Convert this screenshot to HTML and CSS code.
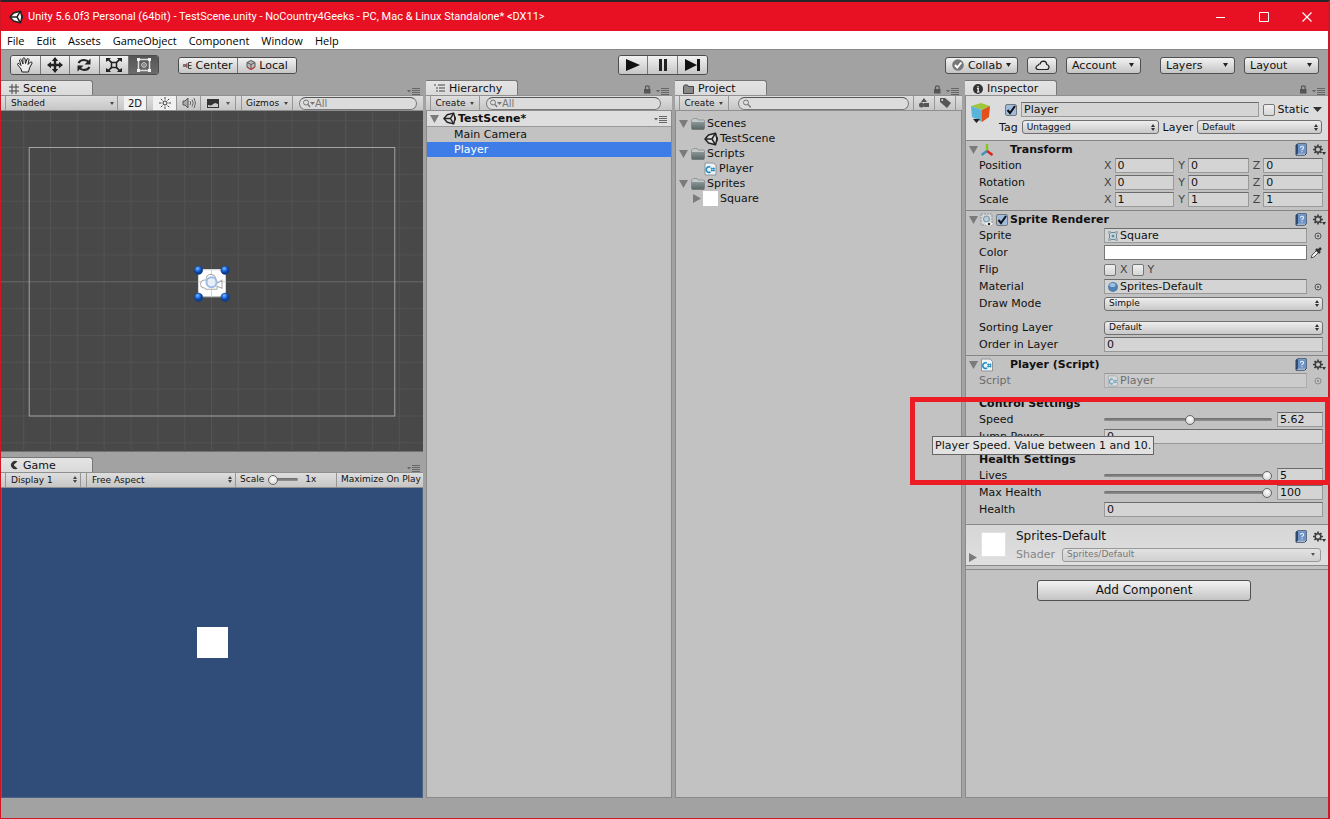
FILE: index.html
```html
<!DOCTYPE html>
<html lang="en">
<head>
<meta charset="utf-8">
<title>Unity 5.6.0f3 Personal (64bit) - TestScene.unity</title>
<link rel="stylesheet" href="styles.css">
</head>
<body>
<svg class="defs" width="0" height="0" aria-hidden="true">
  <defs>
    <symbol id="unity" viewBox="0 0 14 14"><path d="M1 7 L4.500 3 L11.500 1.200 L13 7 L11.500 12.800 L4.500 11 Z" fill="var(--cut)" stroke="currentColor" stroke-width="1.500" stroke-linejoin="round"/><path d="M1 7 H8 L11.500 1.200 M8 7 L11.500 12.800" fill="none" stroke="currentColor" stroke-width="1.500"/><path d="M13.800 4.500V9.500L12 7z" fill="currentColor"/></symbol>
    <symbol id="lock" viewBox="0 0 8 9"><path d="M2.500 4 V2.500 Q2.500 .8 4.300 .8 Q6.200 .8 6.200 2.500 V4" fill="none" stroke="#555" stroke-width="1.200"/><rect x="1" y="4" width="6.500" height="4.500" fill="#555"/></symbol>
    <symbol id="menu" viewBox="0 0 13 8"><path d="M0 3h4L2 5.500z M5 1h8v1H5z M5 3h8v1H5z M5 5h8v1H5z M5 7h8v1H5z" fill="#666"/></symbol>
    <symbol id="folder" viewBox="0 0 14 12"><path d="M.5 10 V2.500 Q.5 1.500 1.500 1.500 L2.500 .5 H6 L7 2 H12.500 Q13.500 2 13.500 3 V10 Z" fill="#c3c9c9" stroke="#7c8585" stroke-width=".7"/><path d="M.2 4 H13.800 L13.500 10.800 Q13.500 11.700 12.500 11.700 H1.500 Q.5 11.700 .5 10.800 Z" fill="url(#folder-front)"/></symbol>
    <linearGradient id="folder-front" x2="0" y2="1"><stop offset="0" stop-color="#8b9696"/><stop offset="1" stop-color="#596464"/></linearGradient>
    <symbol id="cs" viewBox="0 0 13 14"><path d="M1 1 H9.500 L12 3.500 V13 H1 Z" fill="#eef3f6" stroke="#8d9499"/><path d="M6.500 5.200 A2.800 2.800 0 1 0 6.500 10" fill="none" stroke="#1b8bc0" stroke-width="1.500"/><path d="M7.800 5.500 V9.500 M9.800 5.500 V9.500 M6.800 6.600 H11 M6.800 8.500 H11" stroke="#1b8bc0" stroke-width=".9"/></symbol>
    <symbol id="book" viewBox="0 0 12 13"><path d="M1 2 L3 .8 H11.200 V11 L9.500 12.200 H1 Z" fill="#dfe6ee" stroke="#2c4263"/><path d="M3 1.200 H11 V10.800 H3 Z" fill="#6d93c4"/><path d="M1 2 L3 1 V10.800 L1 12 Z" fill="#31496c"/><path d="M5.500 4.800 Q5.500 3.300 7 3.300 Q8.600 3.300 8.600 4.700 Q8.600 5.600 7 6.400 V7.200 M7 8.200 V9.200" fill="none" stroke="#e8f1fb" stroke-width="1.100"/></symbol>
    <symbol id="gear" viewBox="0 0 13 12"><circle cx="5" cy="5.500" r="2.800" fill="none" stroke="#3d3d3d" stroke-width="1.500"/><path d="M5 .5V2.500 M5 8.500V10.500 M0 5.500H2 M8 5.500H10 M1.500 2L2.900 3.400 M7.100 7.600L8.500 9 M8.500 2L7.100 3.400 M1.500 9L2.900 7.600" stroke="#3d3d3d" stroke-width="1.700"/><path d="M9 8h4l-2 3z" fill="#333"/></symbol>
    <symbol id="pick" viewBox="0 0 8 8"><circle cx="4" cy="4" r="3" fill="none" stroke="#555"/><circle cx="4" cy="4" r=".9" fill="#444"/></symbol>
    <symbol id="down" viewBox="0 0 9 8"><path d="M0 0h9L4.500 8z" fill="#7b7b7b"/></symbol>
    <symbol id="right" viewBox="0 0 8 9"><path d="M0 0v9l8-4.500z" fill="#7b7b7b"/></symbol>
    <symbol id="rect" viewBox="0 0 12 12"><path d="M2.500 2.500h7v7h-7z" fill="#c9d8df" stroke="#71858f"/><path d="M1 1h3v3H1z M8 1h3v3H8z M1 8h3v3H1z M8 8h3v3H8z" fill="#9fb1ba"/><circle cx="6" cy="6" r="1.500" fill="#6a8fa3"/></symbol>
  </defs>
</svg>
<div class="window">
  <header class="titlebar">
    <svg class="titlebar-logo" width="14" height="14"><use href="#unity"/></svg>
    <h1 class="titlebar-text">Unity 5.6.0f3 Personal (64bit) - TestScene.unity - NoCountry4Geeks - PC, Mac &amp; Linux Standalone* &lt;DX11&gt;</h1>
    <div class="window-buttons">
      <button aria-label="Minimize"><svg width="10" height="10"><path d="M0 5.500h9" stroke="#fff"/></svg></button>
      <button aria-label="Maximize"><svg width="10" height="10"><path d="M.5 .5h9v9h-9z" fill="none" stroke="#fff"/></svg></button>
      <button aria-label="Close"><svg width="10" height="10"><path d="M.5 .5l9 9m0-9l-9 9" stroke="#fff" stroke-width="1.200"/></svg></button>
    </div>
  </header>
  <nav class="menubar">
    <button>File</button><button>Edit</button><button>Assets</button><button>GameObject</button><button>Component</button><button>Window</button><button>Help</button>
  </nav>
  <div class="toolbar">
    <div class="toolbar-left">
      <div class="group tools">
        <button aria-label="Hand"><svg width="18" height="18" viewBox="0 0 18 18"><path d="M6 16 L5 13 L1.500 8.500 Q1.500 7 3 7.500 L5 9.500 L3.500 4 Q4.500 2.300 5.500 4 L7 8 L6.800 2.500 Q8 1 9 2.500 L9.500 7.500 L11 3 Q12.500 2 13 3.500 L12 8.500 L14.500 6 Q16.300 5.500 16 7.200 L13.500 12 L12.500 16 Z" fill="#eee" stroke="#222"/></svg></button>
        <button aria-label="Move"><svg width="16" height="16" viewBox="0 0 16 16"><path d="M8 0l3.200 4H9.200v2.800H12V4.800L16 8l-4 3.200V9.200H9.200V12h2L8 16l-3.200-4h2V9.200H4v2L0 8l4-3.200v2h2.800V4h-2z" fill="#222"/></svg></button>
        <button aria-label="Rotate"><svg width="16" height="16" viewBox="0 0 16 16"><path d="M2.500 6 Q4 3 8 3 Q11 3 13 5.500 M13.500 10 Q12 13 8 13 Q5 13 3 10.500" fill="none" stroke="#222" stroke-width="2"/><path d="M14.500 1.500v6h-6z M1.500 14.500v-6h6z" fill="#222"/></svg></button>
        <button aria-label="Scale"><svg width="18" height="16" viewBox="0 0 18 16"><path d="M1 1h5L4.600 2.400 7 4.800 5.800 6 3.200 3.600 1 5z M17 1h-5l1.400 1.400L11 4.800 12.200 6l2.600-2.400L17 5z M1 15h5l-1.400-1.400L7 11.200 5.800 10l-2.600 2.400L1 11z M17 15h-5l1.400-1.400-2.400-2.400 1.200-1.200 2.600 2.400L17 11z" fill="#222"/><path d="M6.500 5.500h5v5h-5z" fill="#ddd" stroke="#222" stroke-width="1.500"/></svg></button>
        <button class="active" aria-label="Rect"><svg width="16" height="16" viewBox="0 0 16 16"><path d="M2.500 2.500h11v11h-11z" fill="none" stroke="#ddd" stroke-width="1.500"/><path d="M1 1h3v3h-3z M12 1h3v3h-3z M1 12h3v3h-3z M12 12h3v3h-3z" fill="#f2f2f2"/><circle cx="8" cy="8" r="2.300" fill="none" stroke="#ddd"/><circle cx="8" cy="8" r=".8" fill="#ddd"/></svg></button>
      </div>
      <div class="group pivot">
        <button><svg width="9" height="9" viewBox="0 0 9 9"><path d="M0 3h4v3H0z" fill="#777"/><path d="M4 2v5" stroke="#b33"/><path d="M8.500 1.500H5.500v6h3 M5.500 4.500h3" fill="none" stroke="#444"/></svg>Center</button>
        <button><svg width="10" height="10" viewBox="0 0 10 10"><path d="M5 .5l4 2v4.500l-4 2.500-4-2.500V2.500z" fill="#bbb" stroke="#555"/><path d="M1 2.500l4 2 4-2M5 4.500v5" fill="none" stroke="#555"/><path d="M1 7l4 2.500L9 7" fill="none" stroke="#b44" stroke-width="1.300"/></svg>Local</button>
      </div>
    </div>
    <div class="group play">
      <button aria-label="Play"><svg width="14" height="12"><path d="M0 0l14 6L0 12z" fill="#111"/></svg></button>
      <button aria-label="Pause"><svg width="10" height="12"><path d="M1 0h3v12H1z M6 0h3v12H6z" fill="#222"/></svg></button>
      <button aria-label="Step"><svg width="15" height="12"><path d="M0 0l12 6L0 12z M12 0h3v12h-3z" fill="#111"/></svg></button>
    </div>
    <div class="toolbar-right">
      <button class="btn collab"><svg width="12" height="12" viewBox="0 0 12 12"><circle cx="6" cy="6" r="5.800" fill="#777"/><path d="M3 6l2.300 2.500L9.300 3.500" fill="none" stroke="#fff" stroke-width="2"/></svg>Collab<svg width="5" height="4"><path d="M0 0h5L2.500 4z" fill="#222"/></svg></button>
      <button class="btn cloud" aria-label="Services"><svg width="15" height="11" viewBox="0 0 15 11"><path d="M3.500 9.500 Q1 9.500 1 7.500 Q1 5.800 3 5.500 Q3.200 3.800 5 4 Q6 1.200 8.500 1.200 Q11.500 1.300 11.700 4.500 Q14 5 14 7.200 Q13.800 9.500 11.500 9.500 Z" fill="#e6e6e6" stroke="#222" stroke-width="1.200"/></svg></button>
      <button class="btn drop">Account<svg width="5" height="4"><path d="M0 0h5L2.500 4z" fill="#222"/></svg></button>
      <button class="btn drop layers">Layers<svg width="5" height="4"><path d="M0 0h5L2.500 4z" fill="#222"/></svg></button>
      <button class="btn drop">Layout<svg width="5" height="4"><path d="M0 0h5L2.500 4z" fill="#222"/></svg></button>
    </div>
  </div>

  <main class="workspace">
    <div class="column">
      <section class="panel scene">
        <div class="tabs"><h2 class="tab wide"><svg width="10" height="10"><path d="M3 0v10M7 0v10M0 3h10M0 7h10" stroke="#444"/></svg>Scene</h2><svg class="tab-menu" width="13" height="8"><use href="#menu"/></svg></div>
        <div class="bar">
          <select class="bar-select shading" aria-label="Shading"><option>Shaded</option></select>
          <button class="bar-btn on mode">2D</button>
          <button class="bar-btn on icon" aria-label="Lighting"><svg width="12" height="12" viewBox="0 0 12 12"><circle cx="6" cy="6" r="2" fill="none" stroke="#333"/><path d="M6 0v2.500M6 9.500V12M0 6h2.500M9.500 6H12M1.800 1.800l1.700 1.700M8.500 8.500l1.700 1.700M10.200 1.800L8.500 3.500M3.500 8.500l-1.700 1.700" stroke="#444"/></svg></button>
          <button class="bar-btn icon" aria-label="Audio"><svg width="14" height="12" viewBox="0 0 14 12"><path d="M1 4h2l3-3v10L3 8H1z" fill="#aaa" stroke="#555"/><path d="M8 4q1.500 2 0 4M10 2.500q2.500 3.500 0 7M12 1q3 5 0 10" fill="none" stroke="#666"/></svg></button>
          <button class="bar-btn effects" aria-label="Effects"><svg width="12" height="9"><path d="M0 0h12v9H0z" fill="#333"/><path d="M1 8V6l3 .5L8 4l3 1v3z" fill="#ccc"/></svg><svg class="effects-arrow" width="4" height="3"><path d="M0 0h4L2 3z" fill="#555"/></svg></button>
          <button class="bar-btn gizmos">Gizmos<svg width="4" height="3"><path d="M0 0h4L2 3z" fill="#444"/></svg></button>
          <input class="search filter" type="search" aria-label="Search scene" placeholder="All">
        </div>
        <svg class="scene-view" viewBox="0 0 422 340" preserveAspectRatio="xMidYMid slice">
          <defs>
            <pattern id="grid" x="210" y="170" width="26.800" height="26.800" patternUnits="userSpaceOnUse"><path d="M.5 0V26.800M0 .5H26.800" stroke="#525252" fill="none"/></pattern>
            <radialGradient id="dot" cx=".4" cy=".3"><stop offset="0" stop-color="#7fb8ff"/><stop offset=".6" stop-color="#1c6be0"/><stop offset="1" stop-color="#0b3f9a"/></radialGradient>
          </defs>
          <rect width="422" height="340" fill="#484848"/>
          <rect width="422" height="340" fill="url(#grid)"/>
          <path d="M76.500 0V340M344.500 0V340M210.500 0V340" stroke="#545454"/>
          <path d="M0 170.500H422" stroke="#646464"/>
          <path d="M28.500 36.500H393.500V304.500H28.500Z" fill="none" stroke="#a3a3a3"/>
          <rect x="197" y="158" width="27" height="27" fill="#fff"/>
          <path d="M197.500 158.500h27v27h-27zM210.500 158v27M197 170.500h27" fill="none" stroke="#d5d5d5"/>
          <path d="M204 177q-6-1-4-6 2-3 5-2 0-6 5-6 5 1 5 6l1 3 5-3v8l-5-2v3h-11z" fill="#fff" stroke="#aaa"/>
          <circle cx="210.500" cy="171" r="5" fill="#e9eff8" stroke="#9dbce8" stroke-width="2"/>
          <g fill="url(#dot)" stroke="#173a70" stroke-width=".5"><circle cx="197.500" cy="159" r="4.200"/><circle cx="224" cy="159" r="4.200"/><circle cx="197.500" cy="186" r="4.200"/><circle cx="224" cy="186" r="4.200"/></g>
        </svg>
      </section>
      <section class="panel game">
        <div class="tabs"><h2 class="tab wide"><svg width="10" height="10"><path d="M8.500 1.500A4.200 4.200 0 1 0 8.500 8.500L5 5.500V4.500Z" fill="#333"/></svg>Game</h2><svg class="tab-menu" width="13" height="8"><use href="#menu"/></svg></div>
        <div class="bar">
          <select class="bar-select updown display" aria-label="Display"><option>Display 1</option></select>
          <select class="bar-select updown aspect" aria-label="Aspect"><option>Free Aspect</option></select>
          <label class="scale">Scale<input type="range" min="1" max="5" value="1"><span>1x</span></label>
          <button class="bar-btn maximize">Maximize On Play</button>
        </div>
        <div class="game-view"><div class="sprite"></div></div>
      </section>
    </div>

    <section class="panel hierarchy">
      <div class="tabs"><h2 class="tab"><svg width="11" height="9"><path d="M0 1h2M4 1h7M2 4h2M5 4h6M2 7h2M5 7h6" stroke="#444"/></svg>Hierarchy</h2><svg class="tab-lock" width="8" height="9"><use href="#lock"/></svg><svg class="tab-menu" width="13" height="8"><use href="#menu"/></svg></div>
      <div class="bar"><button class="bar-btn create">Create<svg width="4" height="3"><path d="M0 0h4L2 3z" fill="#444"/></svg></button><input class="search filter" type="search" aria-label="Search hierarchy" placeholder="All"></div>
      <div class="body">
        <div class="scene-row"><svg width="9" height="8"><use href="#down"/></svg><svg class="logo" width="13" height="13"><use href="#unity"/></svg><strong>TestScene*</strong><svg class="row-menu" width="13" height="8"><use href="#menu"/></svg></div>
        <ul class="objects"><li>Main Camera</li><li class="selected">Player</li></ul>
      </div>
    </section>

    <section class="panel project">
      <div class="tabs"><h2 class="tab"><svg width="11" height="10"><path d="M.5 9.500v-7l1-1.500h3l1 1.500h5v7z" fill="#888" stroke="#444"/></svg>Project</h2><svg class="tab-lock" width="8" height="9"><use href="#lock"/></svg><svg class="tab-menu" width="13" height="8"><use href="#menu"/></svg></div>
      <div class="bar"><button class="bar-btn create">Create<svg width="4" height="3"><path d="M0 0h4L2 3z" fill="#444"/></svg></button><input class="search" type="search" aria-label="Search project">
        <button class="bar-btn tag" aria-label="Search by type"><svg width="10" height="10"><path d="M5 0l3 4H2z M5 5h5v4H5z" fill="#555"/><circle cx="2.500" cy="7" r="2.500" fill="#555"/></svg></button>
        <button class="bar-btn tag" aria-label="Search by label"><svg width="11" height="10"><path d="M0 0h5l6 5-4 5-7-6z" fill="#555"/><circle cx="2.200" cy="2" r="1" fill="#ddd"/></svg></button></div>
      <ul class="body tree">
        <li class="dir"><svg width="9" height="8"><use href="#down"/></svg><svg width="14" height="12"><use href="#folder"/></svg>Scenes</li>
        <li class="leaf"><svg class="logo" width="14" height="14"><use href="#unity"/></svg>TestScene</li>
        <li class="dir"><svg width="9" height="8"><use href="#down"/></svg><svg width="14" height="12"><use href="#folder"/></svg>Scripts</li>
        <li class="leaf"><svg width="13" height="14"><use href="#cs"/></svg>Player</li>
        <li class="dir"><svg width="9" height="8"><use href="#down"/></svg><svg width="14" height="12"><use href="#folder"/></svg>Sprites</li>
        <li class="leaf sprite-leaf"><svg width="8" height="9"><use href="#right"/></svg><span class="thumb"></span>Square</li>
      </ul>
    </section>

    <section class="panel inspector">
      <div class="tabs"><h2 class="tab"><svg width="10" height="10"><circle cx="5" cy="5" r="5" fill="#333"/><path d="M5 2v1.500M4 4.500h1.200V8M4 8h2.500" fill="none" stroke="#fff" stroke-width="1.200"/></svg>Inspector</h2><svg class="tab-lock" width="8" height="9"><use href="#lock"/></svg><svg class="tab-menu" width="13" height="8"><use href="#menu"/></svg></div>
      <div class="body">
        <div class="object-head">
          <svg class="cube" width="22" height="22" viewBox="0 0 22 22"><path d="M1 4l10-3 9 3-8 4z" fill="#9dc63b"/><path d="M1 4l11 4v12L2 15z" fill="#5cb3d8"/><path d="M20 4l-8 4v12l7-5z" fill="#e2501c"/><path d="M3 17h7l-3.500 4z" fill="#222"/></svg>
          <div class="object-fields">
            <div class="object-line">
              <input class="check" type="checkbox" aria-label="Active" checked>
              <input class="field name" type="text" aria-label="Name" value="Player">
              <label class="static"><input class="check" type="checkbox">Static</label><svg width="9" height="5"><path d="M0 0h9L4.500 5z" fill="#333"/></svg>
            </div>
            <div class="object-line second">
              <label for="tag">Tag</label><select id="tag" class="popup tag-select"><option>Untagged</option></select>
              <label for="layer">Layer</label><select id="layer" class="popup layer-select"><option>Default</option></select>
            </div>
          </div>
        </div>

        <section class="component">
          <h3 class="component-head"><svg width="9" height="8"><use href="#down"/></svg><svg width="14" height="14" viewBox="0 0 14 14"><path d="M7 8V1" stroke="#88c51d" stroke-width="2.500"/><path d="M7 8l-5.500 4" stroke="#3b96c4" stroke-width="2.500"/><path d="M7 8l5.500 4" stroke="#d22" stroke-width="2.500"/></svg><span class="check-space"></span><span class="component-title">Transform</span><svg width="12" height="13"><use href="#book"/></svg><svg width="13" height="12"><use href="#gear"/></svg></h3>
          <div class="row"><span class="label">Position</span><div class="vector"><label>X<input class="field" value="0"></label><label>Y<input class="field" value="0"></label><label>Z<input class="field" value="0"></label></div></div>
          <div class="row"><span class="label">Rotation</span><div class="vector"><label>X<input class="field" value="0"></label><label>Y<input class="field" value="0"></label><label>Z<input class="field" value="0"></label></div></div>
          <div class="row"><span class="label">Scale</span><div class="vector"><label>X<input class="field" value="1"></label><label>Y<input class="field" value="1"></label><label>Z<input class="field" value="1"></label></div></div>
        </section>

        <section class="component">
          <h3 class="component-head"><svg width="9" height="8"><use href="#down"/></svg><svg width="14" height="14" viewBox="0 0 14 14"><path d="M1 1h11v11H1z" fill="#d5d9db" stroke="#8d9499" stroke-dasharray="2 1"/><circle cx="6.500" cy="6" r="3" fill="#b7cdd9" stroke="#7892a0"/><path d="M5 11q3.500-4 8 0-4 3.500-8 0z" fill="#fff"/><circle cx="9" cy="11" r="1.300" fill="#222"/></svg><input class="check" type="checkbox" aria-label="Sprite Renderer enabled" checked><span class="component-title">Sprite Renderer</span><svg width="12" height="13"><use href="#book"/></svg><svg width="13" height="12"><use href="#gear"/></svg></h3>
          <div class="row"><span class="label">Sprite</span><button class="field object"><svg width="12" height="12"><use href="#rect"/></svg>Square</button><svg class="pick" width="8" height="8"><use href="#pick"/></svg></div>
          <div class="row"><label class="label" for="color">Color</label><button id="color" class="field color" aria-label="Color"></button><svg class="pick dropper" width="13" height="13" viewBox="0 0 13 13"><path d="M1 12l1-3 5-5 2 2-5 5z" fill="#eee" stroke="#555"/><path d="M6 3l4 4M8 5l3-3" stroke="#333" stroke-width="2.500"/></svg></div>
          <div class="row"><span class="label">Flip</span><div class="flip"><label><input class="check" type="checkbox">X</label><label><input class="check" type="checkbox">Y</label></div></div>
          <div class="row"><span class="label">Material</span><button class="field object"><svg width="12" height="12"><circle cx="6" cy="6" r="5" fill="#4f82b0"/><ellipse cx="5.500" cy="4" rx="3" ry="2" fill="#9cc0dd"/></svg>Sprites-Default</button><svg class="pick" width="8" height="8"><use href="#pick"/></svg></div>
          <div class="row"><label class="label" for="draw">Draw Mode</label><select id="draw" class="popup"><option>Simple</option></select></div>
          <div class="row spaced"><label class="label" for="sorting">Sorting Layer</label><select id="sorting" class="popup"><option>Default</option></select></div>
          <div class="row"><label class="label" for="order">Order in Layer</label><input id="order" class="field" value="0"></div>
        </section>

        <section class="component script">
          <h3 class="component-head"><svg width="9" height="8"><use href="#down"/></svg><svg width="14" height="14"><use href="#cs"/></svg><span class="check-space"></span><span class="component-title">Player (Script)</span><svg width="12" height="13"><use href="#book"/></svg><svg width="13" height="12"><use href="#gear"/></svg></h3>
          <div class="row disabled"><span class="label">Script</span><button class="field object" disabled><svg width="12" height="12" viewBox="0 0 13 14"><use href="#cs"/></svg>Player</button><svg class="pick" width="8" height="8"><use href="#pick"/></svg></div>
          <h4 class="group-title">Control Settings</h4>
          <div class="row"><label class="label" for="speed">Speed</label><input id="speed" type="range" min="1" max="10" step="0.01" value="5.62"><input class="field number" aria-label="Speed value" value="5.62"></div>
          <div class="row"><label class="label" for="jump">Jump Power</label><input id="jump" class="field" value="0"></div>
          <h4 class="group-title">Health Settings</h4>
          <div class="row"><label class="label" for="lives">Lives</label><input id="lives" type="range" min="0" max="5" value="5"><input class="field number" aria-label="Lives value" value="5"></div>
          <div class="row"><label class="label" for="max">Max Health</label><input id="max" type="range" min="0" max="100" value="100"><input class="field number" aria-label="Max Health value" value="100"></div>
          <div class="row"><label class="label" for="health">Health</label><input id="health" class="field" value="0"></div>
          <div class="highlight"></div>
          <div class="tooltip" role="tooltip">Player Speed. Value between 1 and 10.</div>
        </section>

        <section class="material">
          <svg class="material-arrow" width="8" height="9"><use href="#right"/></svg>
          <span class="material-thumb"></span>
          <div class="material-info">
            <div class="material-head"><h3>Sprites-Default</h3><svg width="12" height="13"><use href="#book"/></svg><svg width="13" height="12"><use href="#gear"/></svg></div>
            <div class="material-shader"><label for="shader">Shader</label><select id="shader" class="popup single" disabled><option>Sprites/Default</option></select></div>
          </div>
        </section>
        <div class="add"><button class="btn">Add Component</button></div>
      </div>
    </section>
  </main>
  <footer class="status"></footer>
</div>
</body>
</html>
```

FILE: styles.css
```css
* { box-sizing: border-box; }

body {
  margin: 0;
  background: #242026;
  color: #111;
  font: 11px/15px "DejaVu Sans", sans-serif;
}

h1, h2, h3, h4, ul { margin: 0; padding: 0; font: inherit; list-style: none; }
button, input, select { margin: 0; padding: 0; border: 0; border-radius: 0; background: none; color: inherit; font: inherit; min-width: 0; }
svg { flex: none; display: block; }
.defs { position: absolute; }
.logo { color: #222; --cut: #ddd; }

.window {
  display: flex;
  flex-direction: column;
  height: 100vh;
  border: 1px solid #cf1724;
  border-top: 2px solid #29262b;
  border-right-width: 2px;
  background: #a2a2a2;
}

/* Title and menu */
.titlebar { display: flex; align-items: center; height: 29px; padding-left: 8px; background: #e81123; color: #fff; }
.titlebar-logo { color: #222; --cut: #fff; }
.titlebar-text { flex: 1; margin-left: 5px; font: 11px/16px Roboto, sans-serif; white-space: nowrap; overflow: hidden; }
.window-buttons { display: flex; }
.window-buttons button { display: flex; align-items: center; justify-content: center; width: 43px; height: 28px; }
.menubar { display: flex; gap: 12px; height: 18px; padding-left: 6px; background: #fff; font: 11px/17px "Open Sans", sans-serif; color: #000; }

/* Main toolbar */
.toolbar { display: grid; grid-template-columns: 1fr auto 1fr; align-items: center; height: 31px; padding: 0 9px; border-top: 1px solid #888; }
.toolbar-left, .toolbar-right { display: flex; align-items: center; }
.toolbar-right { justify-content: flex-end; gap: 9px; }
.group { display: flex; height: 20px; border: 1px solid #4c4c4c; border-radius: 3px; overflow: hidden; }
.group button { display: flex; flex: 1; align-items: center; justify-content: center; gap: 3px; background: linear-gradient(#f2f2f2, #c6c6c6); }
.group button + button { border-left: 1px solid #777; }
.group .active { background: linear-gradient(#555, #6b6b6b); }
.tools { width: 149px; }
.play { width: 90px; margin-right: 4px; }
.pivot { width: 119px; height: 17px; margin-left: 19px; }
.btn { display: flex; align-items: center; height: 17px; padding: 0 5px; border: 1px solid #505050; border-radius: 3px; background: linear-gradient(#f2f2f2, #c4c4c4); }
.collab { justify-content: space-between; width: 73px; padding: 0 6px; }
.cloud { justify-content: center; width: 30px; }
.drop { justify-content: space-between; width: 75px; padding-right: 6px; }
.layers { margin-left: 10px; }

/* Docked panels */
.workspace { flex: 1; min-height: 0; display: grid; grid-template-columns: minmax(0, 422fr) minmax(0, 246fr) minmax(0, 287fr) minmax(0, 363fr); gap: 3px; }
.column { display: grid; grid-template-rows: 371fr 341fr; gap: 5px; min-height: 0; }
.panel { display: flex; flex-direction: column; min-width: 0; min-height: 0; }
.tabs { display: flex; align-items: flex-end; height: 15px; padding-right: 3px; }
.tab { display: flex; align-items: center; gap: 4px; width: 92px; height: 15px; margin-right: auto; padding: 1px 8px 0; border: 1px solid #777; border-width: 1px 1px 0 0; border-radius: 0 3px 0 0; background: linear-gradient(#e4e4e4, #dadada); }
.tab-lock { margin-right: 5px; margin-bottom: 1px; }
.body { flex: 1; background: #c2c2c2; border: 1px solid #8a8a8a; border-top: 0; }

.bar { display: flex; align-items: center; height: 16px; padding: 0 6px 0 4px; border: 1px solid #8f8f8f; border-width: 1px 0; background: linear-gradient(#dedede, #c6c6c6); font-size: 9px; overflow: hidden; }
.bar-btn { display: flex; flex: none; align-items: center; justify-content: center; height: 14px; padding: 0 4px; border-right: 1px solid #969696; white-space: nowrap; }
.bar-btn.on { background: #f1f1f1; }
.bar-select { appearance: none; flex: none; height: 14px; padding: 0 5px; border: 1px solid #969696; border-width: 0 1px; background: url("data:image/svg+xml,%3Csvg xmlns='http://www.w3.org/2000/svg' width='4' height='3'%3E%3Cpath d='M0 0h4L2 3z' fill='%23444'/%3E%3C/svg%3E") no-repeat right 3px center; }
.updown { background-image: url("data:image/svg+xml,%3Csvg xmlns='http://www.w3.org/2000/svg' width='4' height='7'%3E%3Cpath d='M0 3h4L2 0z M0 4h4L2 7z' fill='%23444'/%3E%3C/svg%3E"); }
.shading { width: 113px; margin-right: 6px; }
.mode { width: 23px; margin-right: 6px; font-size: 10px; }
.icon { width: 24px; }
.effects { gap: 7px; width: 35px; margin-right: 5px; }
.gizmos { gap: 5px; width: 52px; border-left: 1px solid #969696; }
.create { gap: 5px; width: 50px; border-left: 1px solid #969696; }
.search { appearance: none; flex: 1; height: 13px; margin-left: 6px; padding: 0 12px 0 15px; border: 1px solid #777; border-top-color: #555; border-radius: 7px; background: url("data:image/svg+xml,%3Csvg xmlns='http://www.w3.org/2000/svg' width='8' height='9'%3E%3Ccircle cx='3' cy='3.500' r='2.500' fill='none' stroke='%23777'/%3E%3Cpath d='M5 5.500l3 3' stroke='%23777' stroke-width='1.300'/%3E%3C/svg%3E") no-repeat 4px center #dcdcdc; font-size: 10px; }
.filter { background-image: url("data:image/svg+xml,%3Csvg xmlns='http://www.w3.org/2000/svg' width='12' height='9'%3E%3Ccircle cx='3' cy='3.500' r='2.500' fill='none' stroke='%23777'/%3E%3Cpath d='M5 5.500l2 2.500' stroke='%23777' stroke-width='1.300'/%3E%3Cpath d='M7 3h5L9.500 6z' fill='%23777'/%3E%3C/svg%3E"); background-position: 3px center; }
.search::placeholder { color: #777; opacity: 1; }
.hierarchy .bar { padding-right: 11px; }
.project .search { margin-left: 9px; }
.tag { width: 21px; border-left: 1px solid #969696; border-right: 0; }
.search + .tag { margin-left: 4px; }
.tag:last-child { width: 22px; border-right: 1px solid #969696; }

.scene-view { flex: 1; width: 100%; min-height: 0; }
.display { width: 76px; margin-right: 5px; }
.aspect { width: 150px; }
.scale { display: flex; flex: none; align-items: center; gap: 4px; width: 101px; padding-left: 4px; border-right: 1px solid #969696; }
.scale input[type="range"] { flex: none; width: 30px; }
.scale span { margin-left: 3px; }
.game-view { flex: 1; display: flex; align-items: center; justify-content: center; background: #304d79; border: 1px solid #4c6286; border-top: 0; }
.sprite { width: 31px; height: 31px; background: #fff; }
.game .bar { padding-right: 0; }

/* Hierarchy and project */
.scene-row { display: flex; align-items: center; gap: 2px; height: 16px; padding: 0 4px 0 3px; border-bottom: 1px solid #999; background: #dedede; }
.scene-row .logo { margin-left: 2px; }
.row-menu { margin-left: auto; }
.objects li { padding-left: 27px; }
.objects .selected { background: #3e7de7; color: #fff; }
.tree { padding-top: 5px; }
.tree li { display: flex; align-items: center; height: 15px; padding-left: 3px; gap: 2px; }
.dir svg + svg { margin-left: 1px; }
.tree .leaf { padding-left: 28px; }
.tree .sprite-leaf { padding-left: 17px; }
.thumb { width: 15px; height: 15px; background: #fff; }

/* Inspector */
.inspector .body { position: relative; border-right: 0; }
.object-head { display: flex; gap: 6px; height: 45px; padding: 6px 6px 0 4px; background: #dcdcdc; border-top: 1px solid #8f8f8f; }
.object-fields { flex: 1; min-width: 0; }
.object-line { display: flex; align-items: center; gap: 4px; height: 15px; }
.object-line.second { height: 14px; margin-top: 3px; }
.object-line > .check { margin-left: 7px; }
.static { display: flex; align-items: center; gap: 3px; }
.second label:first-child { margin-left: 1px; }
.second .tag-select { flex: 135; }
.second .layer-select { flex: 122; }
.check { appearance: none; flex: none; width: 12px; height: 12px; border: 1px solid #777; border-radius: 2px; background: linear-gradient(#f0f0f0, #d6d6d6); }
.check:checked { background: url("data:image/svg+xml,%3Csvg xmlns='http://www.w3.org/2000/svg' width='10' height='10'%3E%3Cpath d='M1.500 5l2.500 3L9 1' fill='none' stroke='%23111' stroke-width='2'/%3E%3C/svg%3E") no-repeat center #9fbbe0; }
.field { flex: 1; height: 15px; padding: 0 2px; border: 1px solid #999; border-top-color: #6b6b6b; background: #d4d4d4; text-align: left; }
.popup { appearance: none; flex: 1; height: 14px; padding: 0 4px; border: 1px solid #707070; border-radius: 3px; background: url("data:image/svg+xml,%3Csvg xmlns='http://www.w3.org/2000/svg' width='4' height='7'%3E%3Cpath d='M0 3h4L2 0z M0 4h4L2 7z' fill='%23333'/%3E%3C/svg%3E") no-repeat right 3px center, linear-gradient(#eee, #c8c8c8); font-size: 9px; line-height: 11px; }
.single { background: url("data:image/svg+xml,%3Csvg xmlns='http://www.w3.org/2000/svg' width='4' height='3'%3E%3Cpath d='M0 0h4L2 3z' fill='%23555'/%3E%3C/svg%3E") no-repeat right 5px center, linear-gradient(#e2e2e2, #d0d0d0); border-color: #999; }
.popup:disabled { opacity: 1; color: #777; }

.component { padding-bottom: 2px; border-top: 1px solid #858585; }
.component-head { display: flex; align-items: center; gap: 2px; height: 16px; padding: 1px 2px 0 3px; font-weight: bold; }
.component-head > svg:last-child, .material-head > svg:last-child { margin-left: 4px; }
.component-title { flex: 1; white-space: nowrap; }
.check-space { width: 12px; }
.row { display: flex; align-items: center; height: 17px; padding: 0 5px 0 13px; }
.label { flex: 0 0 125px; white-space: nowrap; }
.spaced { margin-top: 7px; }
.vector { flex: 1; display: flex; gap: 4px; min-width: 0; }
.vector label { flex: 1; display: flex; align-items: center; gap: 3px; min-width: 0; color: #444; }
.vector .field { width: 0; color: #111; }
.object { display: flex; align-items: center; gap: 1px; line-height: 13px; }
.color { background: #fff; border-color: #777; }
.pick { margin: 0 1px 0 7px; }
.dropper { margin: 0 0 0 3px; }
.flip { display: flex; gap: 4px; color: #444; }
.flip label { display: flex; align-items: center; gap: 4px; }
.disabled { opacity: .5; }

.script { position: relative; padding-bottom: 6px; }
.group-title { height: 16px; margin-top: 6px; padding-left: 13px; font-weight: bold; line-height: 17px; }
input[type="range"] { appearance: none; flex: 1; height: 12px; }
input[type="range"]::-webkit-slider-runnable-track { height: 3px; border-radius: 2px; background: linear-gradient(#6b6b6b, #929292); }
input[type="range"]::-webkit-slider-thumb { appearance: none; width: 10px; height: 10px; margin-top: -3px; border: 1px solid #666; border-radius: 5px; background: radial-gradient(circle at 50% 35%, #fff, #ccc); }
.row .number { flex: 0 0 46px; margin-left: 5px; }
.highlight { position: absolute; top: 41px; right: -2px; bottom: 39px; left: -56px; border: 5px solid #ed1c24; }
.tooltip { position: absolute; top: 80px; left: -34px; padding: 1px 2px; border: 1px solid #666; background: #e2e2e2; white-space: nowrap; }

.material { display: flex; height: 42px; padding: 3px 2px 0 3px; border: 1px solid #8a8a8a; border-width: 1px 0; background: linear-gradient(#d6d6d6, #dfdfdf); }
.material-arrow { align-self: flex-end; margin-bottom: 3px; }
.material-thumb { width: 25px; height: 25px; margin: 4px 10px 0 4px; border: 1px solid #e2e2e2; background: #fff; }
.material-info { flex: 1; min-width: 0; }
.material-head { display: flex; align-items: center; gap: 2px; height: 17px; font-size: 12px; }
.material-head h3 { flex: 1; }
.material-shader { display: flex; align-items: center; gap: 7px; margin-top: 2px; padding-right: 5px; color: #858585; }
.add { margin-top: 3px; padding: 10px 6px 0 0; border-top: 1px solid #8a8a8a; }
.add .btn { justify-content: center; width: 214px; height: 21px; margin: 0 auto; font-size: 12px; }

.status { height: 20px; }
```
